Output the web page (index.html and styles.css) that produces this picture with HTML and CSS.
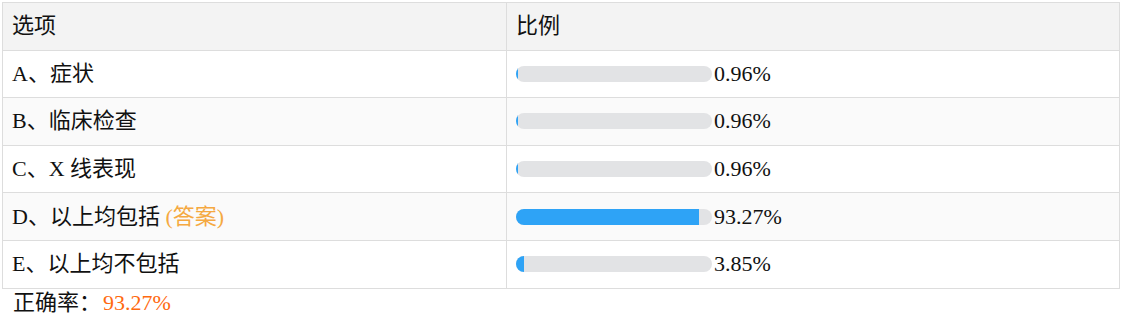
FILE: index.html
```html
<!DOCTYPE html>
<html lang="zh">
<head>
<meta charset="utf-8">
<link rel="stylesheet" href="styles.css">
</head>
<body>
<div class="wrap">
  <table class="stats">
    <thead>
      <tr><th class="col-opt">选项</th><th>比例</th></tr>
    </thead>
    <tbody>
      <tr><td>A、症状</td><td><div class="pct"><div class="track"><div class="fill" style="width:0.96%"></div></div><span>0.96%</span></div></td></tr>
      <tr><td>B、临床检查</td><td><div class="pct"><div class="track"><div class="fill" style="width:0.96%"></div></div><span>0.96%</span></div></td></tr>
      <tr><td>C、X 线表现</td><td><div class="pct"><div class="track"><div class="fill" style="width:0.96%"></div></div><span>0.96%</span></div></td></tr>
      <tr><td>D、以上均包括 <span class="answer">(答案)</span></td><td><div class="pct"><div class="track"><div class="fill" style="width:93.27%"></div></div><span>93.27%</span></div></td></tr>
      <tr><td>E、以上均不包括</td><td><div class="pct"><div class="track"><div class="fill" style="width:3.85%"></div></div><span>3.85%</span></div></td></tr>
    </tbody>
  </table>
  <div class="rate">正确率：<span class="rate-val">93.27%</span></div>
</div>
</body>
</html>
```
FILE: styles.css
```css
html, body {
  margin: 0;
  padding: 0;
  background: #fff;
}
body {
  font-family: "Liberation Serif", "Noto Sans CJK SC", serif;
  font-size: 22px;
  color: #111;
}
.wrap {
  padding: 2px;
}
.stats {
  width: 1118px;
  border-collapse: collapse;
  table-layout: fixed;
}
.stats th, .stats td {
  border: 1px solid #dddddd;
  padding: 0 9px;
  height: 46.6px;
  line-height: 24px;
  text-align: left;
  font-weight: normal;
  vertical-align: middle;
}
.col-opt {
  width: 485px;
}
.stats thead tr {
  background: #f3f3f3;
}
.stats tbody tr:nth-child(even) {
  background: #fafafa;
}
.pct {
  display: flex;
  align-items: center;
}
.track {
  width: 196px;
  height: 16px;
  border-radius: 8px;
  background: #e2e3e5;
  overflow: hidden;
  margin-right: 2px;
}
.fill {
  height: 100%;
  background: #2ea3f6;
}
.answer {
  color: #f5a941;
}
.rate {
  padding: 0 0 0 11px;
  line-height: 28px;
}
.rate-val {
  margin-left: 2px;
  color: #ff6a0f;
}
```
